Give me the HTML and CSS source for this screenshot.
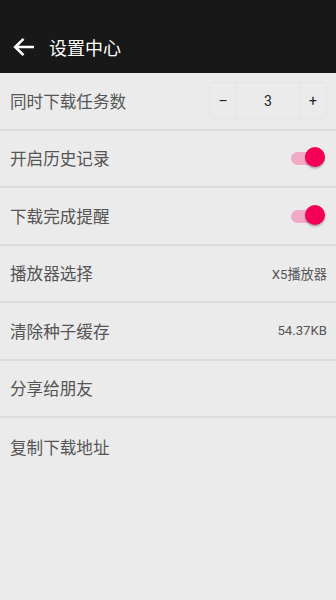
FILE: index.html
```html
<!DOCTYPE html>
<html>
<head>
<meta charset="utf-8">
<link rel="stylesheet" href="styles.css">
</head>
<body>
<header class="bar">
  <svg class="back" width="22" height="20" viewBox="0 0 22 20"><path d="M21 10H2.5M10.5 1.8L2.2 10l8.3 8.2" fill="none" stroke="#fff" stroke-width="2.6"/></svg>
  <span class="title">设置中心</span>
</header>
<main class="list">
  <div class="row">
    <span class="label">同时下载任务数</span>
    <div class="stepper"><span class="sbtn">–</span><span class="snum">3</span><span class="sbtn">+</span></div>
  </div>
  <div class="row">
    <span class="label">开启历史记录</span>
    <span class="switch"><span class="track"></span><span class="thumb"></span></span>
  </div>
  <div class="row">
    <span class="label">下载完成提醒</span>
    <span class="switch"><span class="track"></span><span class="thumb"></span></span>
  </div>
  <div class="row">
    <span class="label">播放器选择</span>
    <span class="value">X5播放器</span>
  </div>
  <div class="row">
    <span class="label">清除种子缓存</span>
    <span class="value">54.37KB</span>
  </div>
  <div class="row">
    <span class="label">分享给朋友</span>
  </div>
  <div class="row last">
    <span class="label">复制下载地址</span>
  </div>
</main>
</body>
</html>
```
FILE: styles.css
```css
html, body { margin: 0; padding: 0; }
body {
  width: 336px;
  height: 600px;
  background: #ebebeb;
  font-family: "Noto Sans CJK SC", "Noto Sans", Roboto, sans-serif;
  overflow: hidden;
}
.bar {
  height: 73px;
  background: #181818;
  display: flex;
  align-items: flex-end;
  padding: 0 0 15px 13px;
  box-sizing: border-box;
}
.back { display: block; margin-bottom: 1px; }
.title {
  color: #fff;
  font-size: 18px;
  line-height: 22px;
  margin-left: 14px;
}
.list { display: flex; flex-direction: column; }
.row {
  height: 57.5px;
  box-sizing: border-box;
  border-bottom: 2px solid #dcdcdc;
  display: flex;
  align-items: center;
  justify-content: space-between;
  padding: 0 9px 0 10px;
}
.row.last { border-bottom: none; }
.label {
  color: #555;
  font-size: 16.6px;
  line-height: 20px;
}
.value {
  color: #555;
  font-size: 13.2px;
  font-family: Roboto, "Noto Sans CJK SC", sans-serif;
}
.stepper {
  display: flex;
  height: 37px;
  border: 1px solid #e4e4e4;
  border-radius: 3px;
  box-sizing: border-box;
}
.sbtn, .snum {
  display: flex;
  align-items: center;
  justify-content: center;
  color: #222;
  font-family: Roboto, sans-serif;
  font-size: 14px;
}
.sbtn { width: 26px; }
.snum {
  width: 62px;
  border-left: 1px solid #e4e4e4;
  border-right: 1px solid #e4e4e4;
}
.switch {
  position: relative;
  width: 36px;
  height: 22px;
  margin-right: 1px;
}
.track {
  position: absolute;
  left: 1px;
  top: 5px;
  width: 28px;
  height: 13px;
  border-radius: 7px;
  background: #f0aac5;
}
.thumb {
  position: absolute;
  right: 1px;
  top: 0;
  width: 20px;
  height: 20px;
  border-radius: 50%;
  background: #f50057;
  box-shadow: 0 1.5px 2px rgba(0,0,0,0.3);
}
```
